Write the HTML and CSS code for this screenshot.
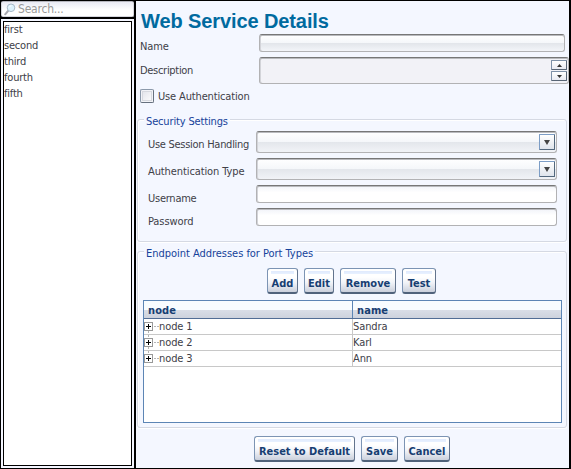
FILE: index.html
```html
<!DOCTYPE html>
<html lang="en">
<head>
<meta charset="utf-8">
<title>Web Service Details</title>
<link rel="stylesheet" href="styles.css">
</head>
<body>
<div class="window">
  <aside class="sidebar">
    <div class="search">
      <svg class="search-icon" width="12" height="13" viewBox="0 0 12 13"><path d="M4 8 1.2 11.3" stroke="#a9a9b0" stroke-width="2" stroke-linecap="round"/><circle cx="7" cy="4.8" r="3.8" fill="#dcf1fc" stroke="#a9bac8"/><path d="M5 4.5Q5.5 2.8 7.5 2.8" fill="none" stroke="#fff"/></svg>
      <span class="search-text">Search...</span>
    </div>
    <div class="list-frame">
      <ul class="list"><li>first</li><li>second</li><li>third</li><li>fourth</li><li>fifth</li></ul>
    </div>
  </aside>
  <main class="details">
    <h1><span>Web Service Details</span></h1>
    <div class="row name-row"><label>Name</label><div class="field gray"></div></div>
    <div class="row desc-row"><label class="w-desc">Description</label>
      <div class="field area"><div class="spinner">
        <i><svg width="5" height="3" viewBox="0 0 5 3"><path d="M0 3 2.5 0 5 3z" fill="#333"/></svg></i>
        <i><svg width="5" height="3" viewBox="0 0 5 3"><path d="M0 0h5L2.5 3z" fill="#333"/></svg></i>
      </div></div>
    </div>
    <div class="check-row"><span class="checkbox"></span><label class="w-auth">Use Authentication</label></div>
    <section class="group security">
      <h2 class="w-sec">Security Settings</h2>
      <div class="form">
        <label class="w-session">Use Session Handling</label><div class="field combo"><i><svg width="6" height="5" viewBox="0 0 6 5"><path d="M0 0h6L3 5z" fill="#444"/></svg></i></div>
        <label class="w-type">Authentication Type</label><div class="field combo"><i><svg width="6" height="5" viewBox="0 0 6 5"><path d="M0 0h6L3 5z" fill="#444"/></svg></i></div>
        <label class="w-user">Username</label><div class="field"></div>
        <label class="w-pass">Password</label><div class="field"></div>
      </div>
    </section>
    <section class="group endpoints">
      <h2 class="w-end">Endpoint Addresses for Port Types</h2>
      <div class="buttons"><button class="b-add">Add</button><button class="b-edit">Edit</button><button class="b-remove">Remove</button><button class="b-test">Test</button></div>
      <div class="table">
        <div class="tr head"><b>node</b><b>name</b></div>
        <div class="tr"><span class="tree"><svg width="15" height="15" viewBox="0 0 15 15" shape-rendering="crispEdges"><path d="M4.5 12v3M10 7.5h5" stroke="#b5b5b5" stroke-dasharray="2 1"/><path d="M.5 3.5h8v8h-8z" fill="#fff" stroke="#999"/><path d="M2 7.5h5M4.5 5v5" stroke="#000"/></svg>node 1</span><span>Sandra</span></div>
        <div class="tr"><span class="tree"><svg width="15" height="15" viewBox="0 0 15 15" shape-rendering="crispEdges"><path d="M4.5 0v15M10 7.5h5" stroke="#b5b5b5" stroke-dasharray="2 1"/><path d="M.5 3.5h8v8h-8z" fill="#fff" stroke="#999"/><path d="M2 7.5h5M4.5 5v5" stroke="#000"/></svg>node 2</span><span>Karl</span></div>
        <div class="tr"><span class="tree"><svg width="15" height="15" viewBox="0 0 15 15" shape-rendering="crispEdges"><path d="M4.5 0v3M10 7.5h5" stroke="#b5b5b5" stroke-dasharray="2 1"/><path d="M.5 3.5h8v8h-8z" fill="#fff" stroke="#999"/><path d="M2 7.5h5M4.5 5v5" stroke="#000"/></svg>node 3</span><span>Ann</span></div>
      </div>
    </section>
    <div class="buttons footer"><button class="b-reset">Reset to Default</button><button class="b-save">Save</button><button class="b-cancel">Cancel</button></div>
  </main>
</div>
</body>
</html>
```
FILE: styles.css
```css
* { box-sizing: border-box; }
body { margin: 0; font: 11px/16px "DejaVu Sans Condensed", "DejaVu Sans", sans-serif; font-stretch: condensed; color: #404048; letter-spacing: -0.1px; }
.window { width: 571px; height: 469px; background: #000; padding: 1px 2px 1px 1px; display: flex; gap: 2px; overflow: hidden; white-space: nowrap; }
.sidebar { width: 133px; display: flex; flex-direction: column; gap: 2px; }
.search { height: 16px; display: flex; align-items: center; padding-left: 2px; background: linear-gradient(#e9eaf4, #fff 60%); border: 1px solid #d6d7de; border-top-color: #b5b6be; border-radius: 2px; color: #999; font-size: 12px; }
.search-text { margin-left: 2px; letter-spacing: -.2px; }
.list-frame { flex: 1; background: #f4f6ff; padding: 2px; }
.list { margin: 0; padding: 0; list-style: none; height: 100%; border: 1px solid #000; background: #fff; letter-spacing: -.2px; }
.list li { height: 16px; }
.details { width: 433px; background: #f4f7ff; display: flex; flex-direction: column; }
h1 { margin: 0; height: 33px; padding: 7px 0 0 5px; font: bold 20px/26px "Liberation Sans", sans-serif; letter-spacing: -0.1px; color: #006a9f; }
.row { display: flex; padding-left: 4px; }
.row label { width: 119px; }
.name-row { height: 23px; }
.name-row label { padding-top: 5px; }
.desc-row label { padding-top: 6px; }
.desc-row { height: 32px; }
.w-desc { letter-spacing: -.3px; }
.w-auth { letter-spacing: -.15px; }
.w-session { letter-spacing: -.28px; }
.w-user { letter-spacing: -.25px; }
.w-end { letter-spacing: -.03px; }
.w-sec { letter-spacing: -.15px; }
.field { height: 18px; border: 1px solid #b2b2b4; border-top: 1px solid #777; border-radius: 3px; background: linear-gradient(#f1f3f9, #fff 40%); box-shadow: inset 0 1px #b9babe, inset 1px 0 #d3d4d9; }
.gray { width: 306px; background: linear-gradient(#fff, #f5f7fa 48%, #e2e5ea 50%, #f3f5f9); }
.area { width: 310px; height: 27px; background: #f2f2f7; padding: 1px 1px; display: flex; justify-content: flex-end; }
.spinner { display: grid; grid-template-rows: 10px 10px; gap: 1px; padding-top: 1px; width: 16px; }
i { display: flex; align-items: center; justify-content: center; border: 1px solid #7d90a7; border-bottom-color: #586575; border-right-color: #586575; border-radius: 1px; background: linear-gradient(#fff, #e8eaf2); }
.check-row { height: 30px; padding-left: 4px; display: flex; align-items: flex-start; }
.checkbox { width: 14px; height: 14px; border: 1px solid #8b99aa; border-right-color: #66707e; border-bottom-color: #66707e; border-radius: 2px; background: linear-gradient(135deg, #dfe1e8, #fff); box-shadow: inset 0 0 0 1px #f2f3f7, inset 0 0 0 2px #d7d9df; }
.check-row label { margin-left: 4px; }
.group { width: 430px; margin-left: 1px; border: 1px solid #d5d9e3; border-radius: 3px; box-shadow: inset 1px 1px #fff, 0 1px #fff; }
h2 { margin: -6px 0 0 6px; padding: 0 2px; width: max-content; height: 16px; line-height: 16px; font-size: 11px; font-weight: normal; color: #16429a; background: #f4f7ff; }
.security { height: 123px; margin-bottom: 9px; }
.form { display: grid; grid-template-columns: 108px 301px; grid-template-rows: 22px 22px 18px 18px; row-gap: 5px; padding: 1px 0 0 10px; }
.form label { align-self: start; padding-top: 6px; }
.combo { height: 22px; display: flex; justify-content: flex-end; padding: 2px 1px 2px 0; background: linear-gradient(#fff, #f5f7fa 48%, #e3e6eb 50%, #f1f3f7); }
.combo i { width: 16px; height: 16px; border-color: #7c9dc6 #52677d #52677d #7c9dc6; background: linear-gradient(#fff, #dfe4ec); }
.endpoints { height: 177px; }
.buttons { display: flex; gap: 6px; padding: 6px 0 6px 129px; }
button { height: 26px; padding: 7px 0 0; border: 1px solid #7c94b4; border-bottom: 2px solid #50627b; border-right-color: #63748d; border-radius: 3px; background: linear-gradient(#e0eafd, #e8f1ff) 50% 2px / calc(100% - 6px) 3px no-repeat, linear-gradient(#fff 35%, #f1f3f8 60%, #cbd0dc); color: #173e72; font: bold 11px/16px "DejaVu Sans Condensed", "DejaVu Sans", sans-serif; font-stretch: condensed; letter-spacing: 0; }
.b-add { width: 31px; } .b-edit { width: 30px; } .b-remove { width: 56px; } .b-test { width: 34px; }
.b-reset { width: 101px; } .b-save { width: 37px; } .b-cancel { width: 46px; }
.footer { padding: 8px 0 0 118px; }
.table { width: 419px; height: 123px; margin-left: 5px; border: 1px solid #5c85b5; background: #fff; }
.tr { display: grid; grid-template-columns: 209px 208px; height: 16px; border-bottom: 1px solid #c8c8c8; line-height: 15px; }
.tr > :first-child { border-right: 1px solid #c8c8c8; }
.head { height: 18px; background: linear-gradient(#f8fcff 50%, #d9dde6 55%, #cdd2dd); border-bottom-color: #526d95; color: #173e72; line-height: 19px; }
.head > :first-child { border-color: #5c85b5; }
.head b { padding-left: 4px; letter-spacing: .1px; height: 17px; }
.tree { display: flex; }
```
